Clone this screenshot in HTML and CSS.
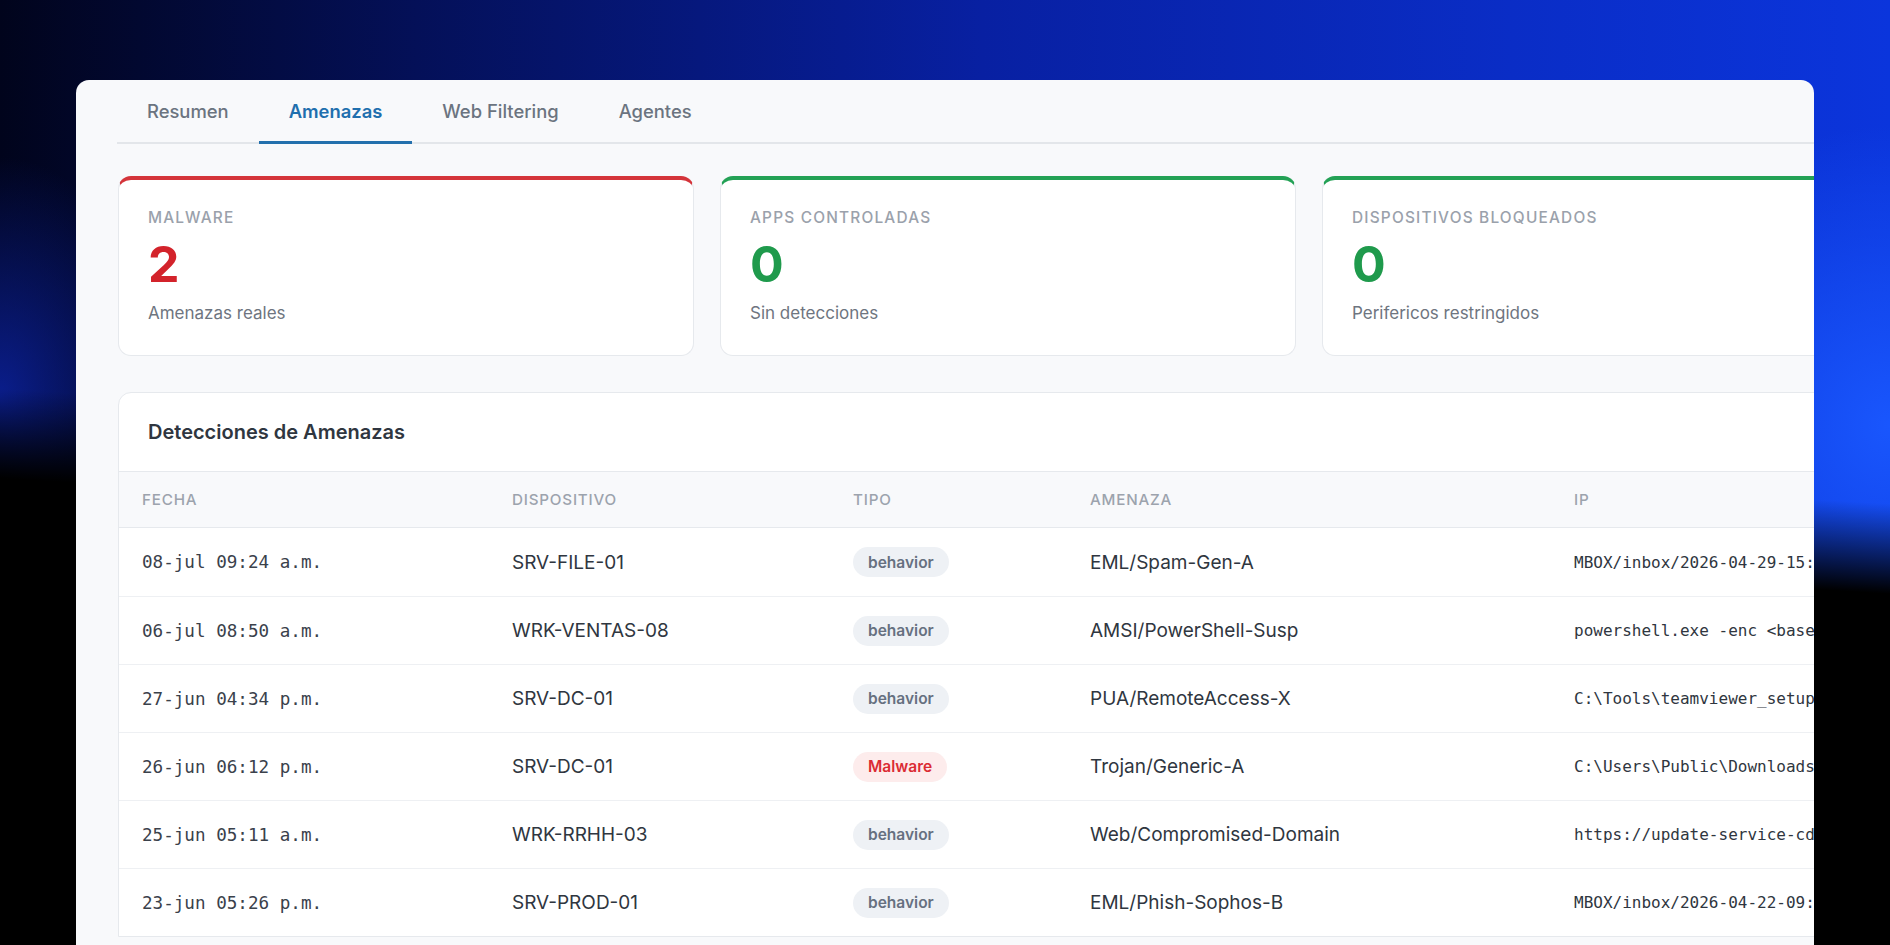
FILE: index.html
```html
<!DOCTYPE html>
<html lang="es">
<head>
<meta charset="utf-8">
<title>Amenazas</title>
<link rel="stylesheet" href="styles.css">
</head>
<body>
<div class="frame">
  <div class="panel">
    <div class="panel-inner">
      <nav class="tabs">
        <a class="tab">Resumen</a>
        <a class="tab active">Amenazas</a>
        <a class="tab">Web Filtering</a>
        <a class="tab">Agentes</a>
      </nav>

      <section class="stats">
        <div class="stat stat-red">
          <div class="stat-label">Malware</div>
          <div class="stat-value red">2</div>
          <div class="stat-sub">Amenazas reales</div>
        </div>
        <div class="stat stat-green">
          <div class="stat-label">Apps controladas</div>
          <div class="stat-value green">0</div>
          <div class="stat-sub">Sin detecciones</div>
        </div>
        <div class="stat stat-green">
          <div class="stat-label">Dispositivos bloqueados</div>
          <div class="stat-value green">0</div>
          <div class="stat-sub">Perifericos restringidos</div>
        </div>
      </section>

      <section class="table-card">
        <h2 class="table-title">Detecciones de Amenazas</h2>
        <div class="table">
          <div class="row head">
            <div class="cell">Fecha</div>
            <div class="cell">Dispositivo</div>
            <div class="cell">Tipo</div>
            <div class="cell">Amenaza</div>
            <div class="cell">IP</div>
          </div>
          <div class="row">
            <div class="cell mono">08-jul 09:24 a.m.</div>
            <div class="cell">SRV-FILE-01</div>
            <div class="cell"><span class="badge">behavior</span></div>
            <div class="cell">EML/Spam-Gen-A</div>
            <div class="cell mono small">MBOX/inbox/2026-04-29-15:32:11.eml</div>
          </div>
          <div class="row">
            <div class="cell mono">06-jul 08:50 a.m.</div>
            <div class="cell">WRK-VENTAS-08</div>
            <div class="cell"><span class="badge">behavior</span></div>
            <div class="cell">AMSI/PowerShell-Susp</div>
            <div class="cell mono small">powershell.exe -enc &lt;base64&gt;</div>
          </div>
          <div class="row">
            <div class="cell mono">27-jun 04:34 p.m.</div>
            <div class="cell">SRV-DC-01</div>
            <div class="cell"><span class="badge">behavior</span></div>
            <div class="cell">PUA/RemoteAccess-X</div>
            <div class="cell mono small">C:\Tools\teamviewer_setup.exe</div>
          </div>
          <div class="row">
            <div class="cell mono">26-jun 06:12 p.m.</div>
            <div class="cell">SRV-DC-01</div>
            <div class="cell"><span class="badge danger">Malware</span></div>
            <div class="cell">Trojan/Generic-A</div>
            <div class="cell mono small">C:\Users\Public\Downloads\invoice.exe</div>
          </div>
          <div class="row">
            <div class="cell mono">25-jun 05:11 a.m.</div>
            <div class="cell">WRK-RRHH-03</div>
            <div class="cell"><span class="badge">behavior</span></div>
            <div class="cell">Web/Compromised-Domain</div>
            <div class="cell mono small">https://update-service-cdn.net</div>
          </div>
          <div class="row">
            <div class="cell mono">23-jun 05:26 p.m.</div>
            <div class="cell">SRV-PROD-01</div>
            <div class="cell"><span class="badge">behavior</span></div>
            <div class="cell">EML/Phish-Sophos-B</div>
            <div class="cell mono small">MBOX/inbox/2026-04-22-09:14:03.eml</div>
          </div>
        </div>
      </section>
    </div>
  </div>
</div>
</body>
</html>
```

FILE: styles.css
```css
* { box-sizing: border-box; }

html, body {
  margin: 0;
  height: 945px;
  overflow: hidden;
}

body {
  font-family: Inter, "Noto Sans", "Liberation Sans", sans-serif;
  background:
    linear-gradient(183.5deg, rgba(0,0,0,0) 0%, rgba(0,0,0,0) 47.5%, #000 56%, #000 100%),
    radial-gradient(ellipse 280px 300px at 100% 45%, rgba(26,88,255,0.95) 0%, rgba(26,88,255,0) 100%),
    radial-gradient(ellipse 160px 240px at 0% 42%, rgba(12,34,160,0.85) 0%, rgba(12,34,160,0) 100%),
    linear-gradient(to right, #01041c 0%, #041058 22%, #0820a2 52%, #0a2dc6 80%, #0b35dc 100%);
}

.frame {
  padding: 80px 76px 0 76px;
  height: 945px;
}

.panel {
  height: 865px;
  background: #f8f9fb;
  border-radius: 13px 13px 0 0;
  overflow: hidden;
}

.panel-inner {
  width: 1830px;
  padding-left: 41px;
}

/* Tabs */
.tabs {
  display: flex;
  border-bottom: 2px solid #e3e6ea;
  height: 64px;
}

.tab {
  display: flex;
  align-items: center;
  padding: 0 30px;
  height: 64px;
  margin-bottom: -2px;
  border-bottom: 3px solid transparent;
  font-size: 18.4px;
  font-weight: 500;
  color: #6b7480;
}

.tab.active {
  color: #1f6fae;
  font-weight: 600;
  border-bottom-color: #2370ad;
}

/* Stat cards */
.stats {
  display: flex;
  gap: 26px;
  margin-top: 32px;
  margin-left: 1px;
}

.stat {
  width: 576px;
  height: 180px;
  flex: none;
  background: #fff;
  border: 1px solid #e6e9ed;
  border-top: 4px solid #d6343a;
  border-radius: 13px;
  padding: 28px 29px 0;
}

.stat-red { border-top-color: #d4343a; }
.stat-green { border-top-color: #23a155; }

.stat-label {
  font-size: 15.4px;
  line-height: 20px;
  letter-spacing: 1.2px;
  text-transform: uppercase;
  color: #9aa1ab;
  font-weight: 500;
}

.stat-value {
  margin-top: 8px;
  font-size: 50px;
  line-height: 56px;
  font-weight: 700;
}

.stat-value.red { color: #d3232b; }
.stat-value.green { color: #1f9a4c; }

.stat-sub {
  margin-top: 10px;
  font-size: 17px;
  line-height: 22px;
  color: #6e7580;
}

/* Table card */
.table-card {
  margin-top: 36px;
  margin-left: 1px;
  width: 1780px;
  background: #fff;
  border: 1px solid #e6e9ed;
  border-radius: 13px 13px 0 0;
}

.table-title {
  margin: 0;
  height: 78px;
  display: flex;
  align-items: center;
  padding-left: 29px;
  font-size: 20px;
  font-weight: 600;
  color: #2f3640;
}

.row {
  display: grid;
  grid-template-columns: 370px 341px 237px 484px 1fr;
  height: 68px;
  align-items: center;
  border-top: 1px solid #eef0f3;
  font-size: 19px;
  color: #2f3640;
}

.row.head {
  height: 57px;
  background: #f8f9fb;
  border-top: 1px solid #e6e9ed;
  border-bottom: 1px solid #e6e9ed;
  font-size: 15.2px;
  letter-spacing: 0.8px;
  text-transform: uppercase;
  color: #9ca3ad;
  font-weight: 500;
}

.row.head + .row { border-top: none; }

.cell {
  padding-left: 23px;
  white-space: nowrap;
  overflow: hidden;
}

.mono {
  font-family: "DejaVu Sans Mono", "Liberation Mono", monospace;
  font-size: 17.6px;
  color: #3a414b;
}

.mono.small {
  font-size: 16px;
  color: #2f3640;
}

.badge {
  display: inline-flex;
  align-items: center;
  height: 30px;
  padding: 0 15px;
  border-radius: 15px;
  background: #eef1f5;
  color: #667080;
  font-size: 15.5px;
  font-weight: 600;
}

.badge.danger {
  background: #fdecec;
  color: #db2b33;
}
```
